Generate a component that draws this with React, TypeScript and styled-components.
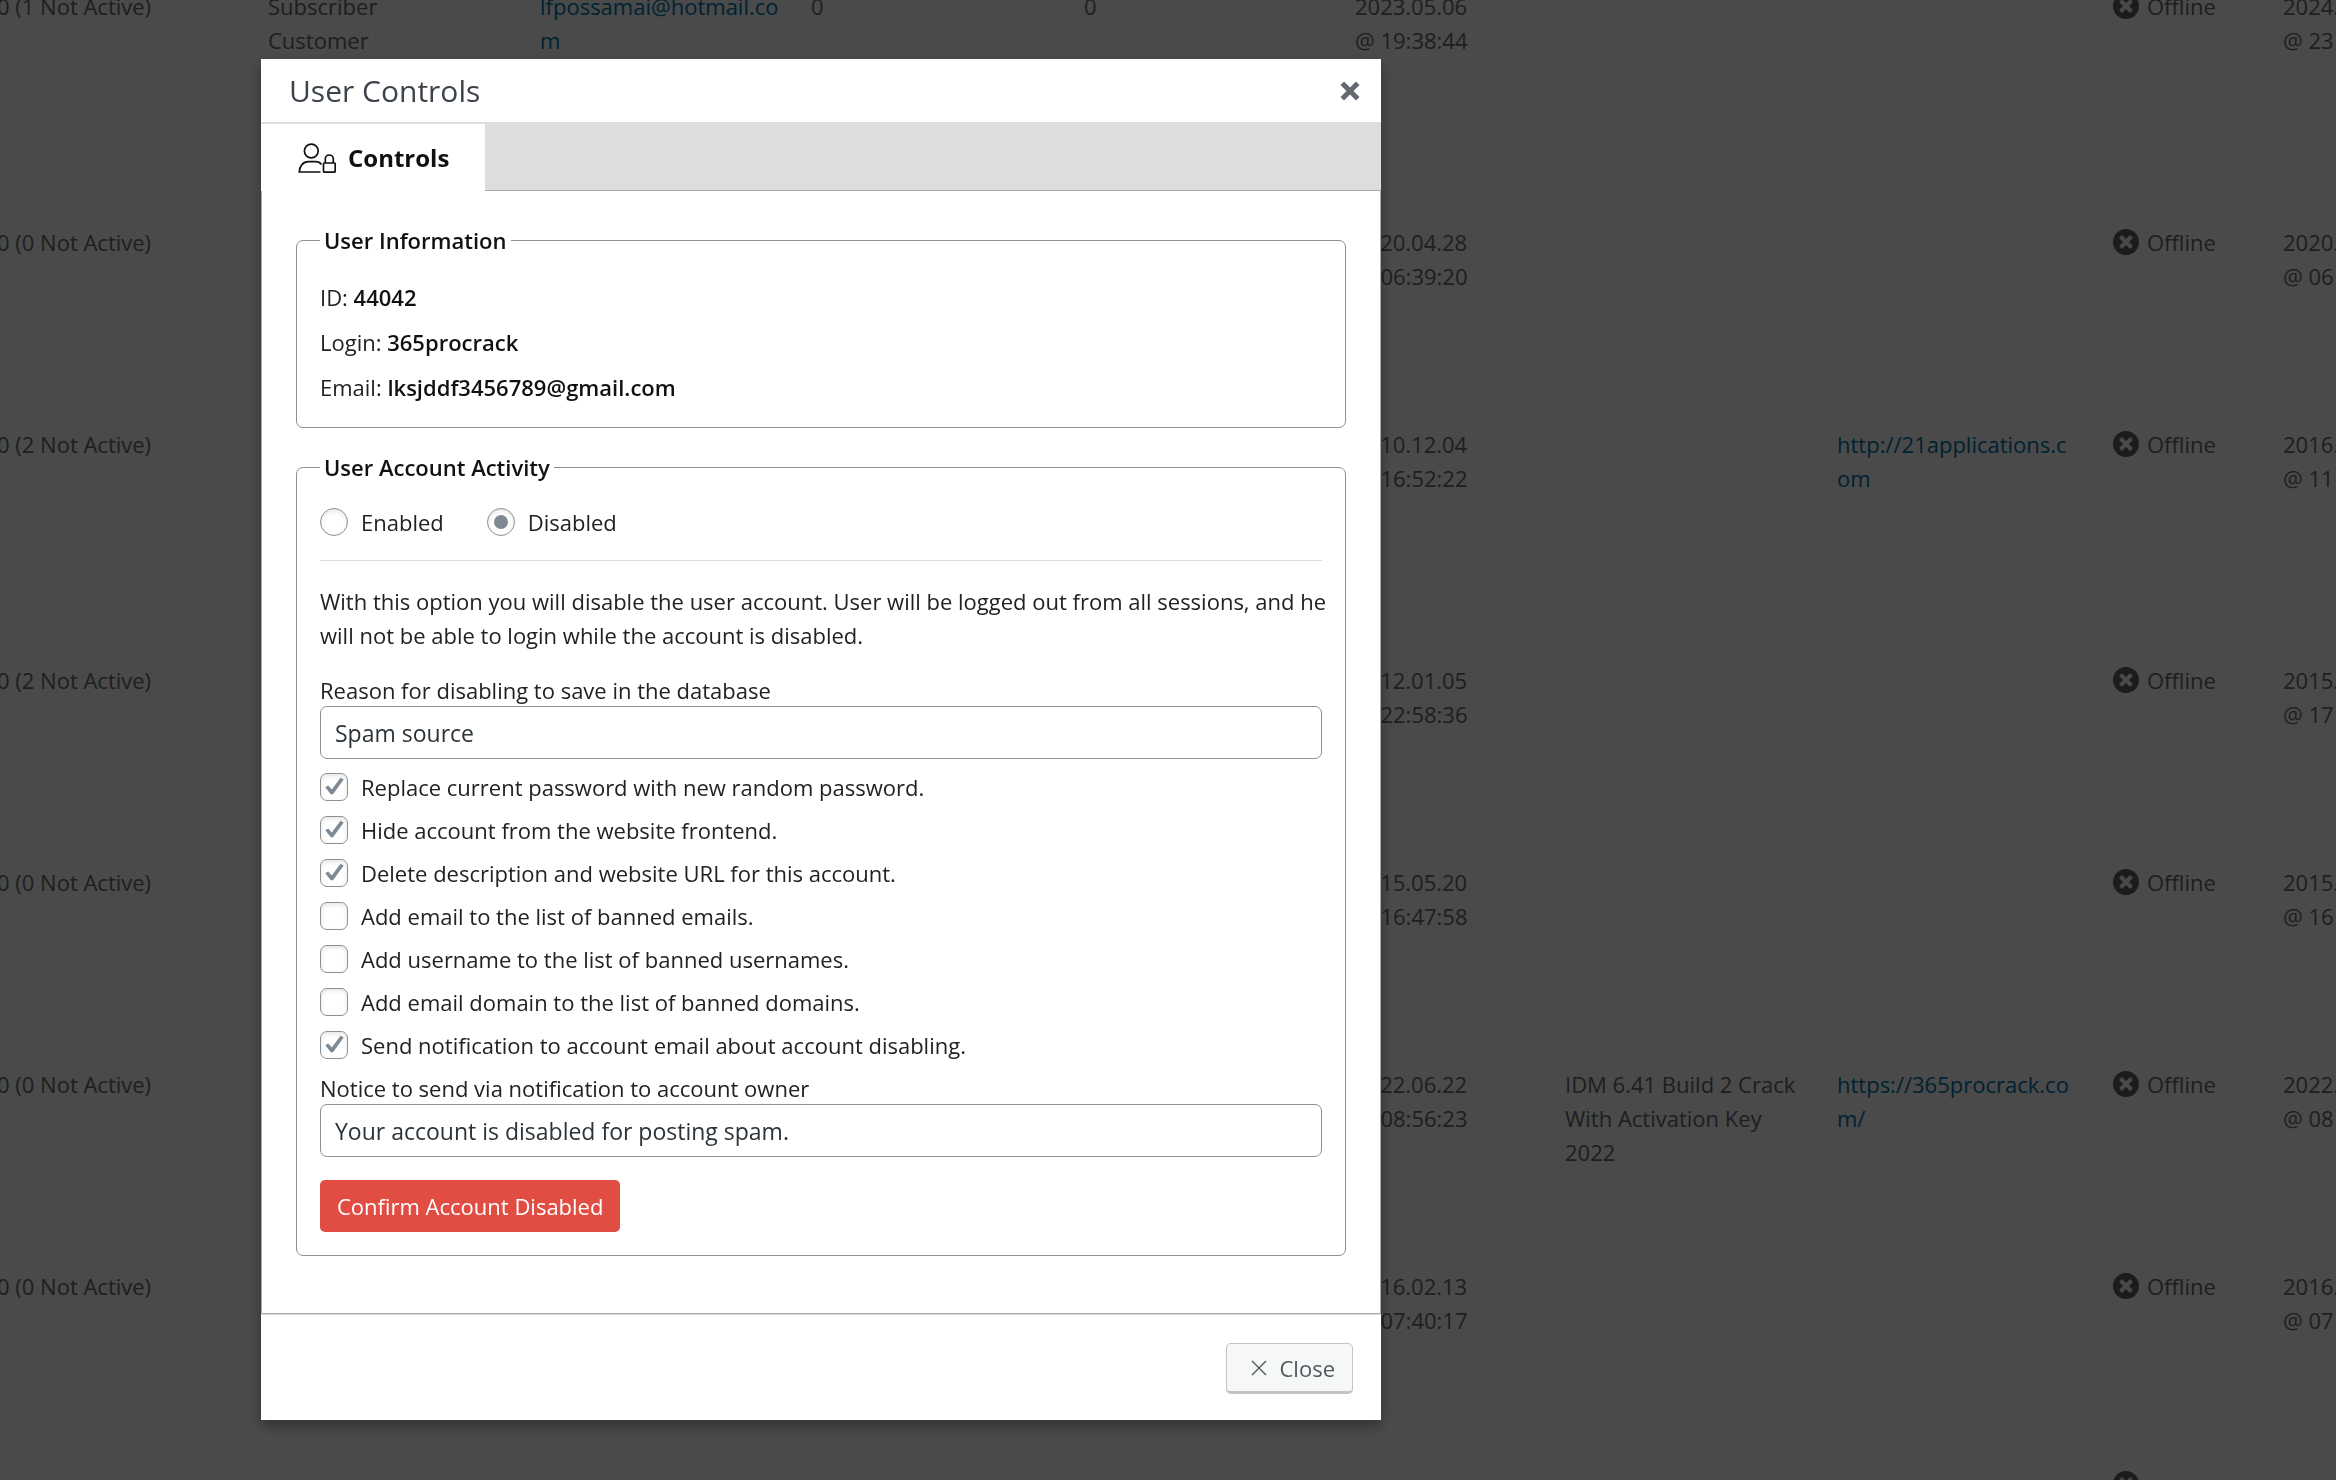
import React, { useState } from "react";
import styled, { createGlobalStyle } from "styled-components";

const GlobalStyle = createGlobalStyle`
  *, *::before, *::after { box-sizing: border-box; }
  body {
    margin: 0;
    background: #f4f8f4;
    color: #1d2327;
    font-family: "Open Sans", "Noto Sans", sans-serif;
    font-size: 22px;
    line-height: 34px;
  }
  button, input { font: inherit; }
`;

/* ---------- users list behind the dialog ---------- */

const Page = styled.main`
  height: 100vh;
  overflow: hidden;
`;

const UsersTable = styled.table`
  width: calc(100% + 80px);
  margin: -25px 0 0 -20px;
  table-layout: fixed;
  border-collapse: collapse;
  color: #646970;
`;

const Col = styled.col<{ $w?: number }>`
  width: ${(p) => (p.$w ? `${p.$w}px` : "auto")};
`;

const UserRow = styled.tr<{ $tall?: boolean }>`
  height: ${(p) => (p.$tall ? 236 : 202)}px;
`;

const Cell = styled.td`
  padding: 14px 17px;
  vertical-align: top;
  white-space: nowrap;
`;

const Line = styled.span`
  display: block;
`;

const SiteLink = styled.a`
  color: #0073aa;
  text-decoration: none;
`;

const Status = styled.span`
  display: flex;
  align-items: center;
  gap: 8px;
  padding-left: 4px;

  svg {
    width: 26px;
    height: 26px;
    flex: none;
  }
`;

/* ---------- dialog ---------- */

const Overlay = styled.div`
  position: fixed;
  inset: 0;
  overflow: hidden;
  padding: 59px 0 0 261px;
  background: rgba(0, 0, 0, 0.7);
`;

const Dialog = styled.section`
  width: 1120px;
  max-width: calc(100% - 40px);
  background: #fff;
  box-shadow: 0 6px 12px rgba(0, 0, 0, 0.35);
`;

const DialogHeader = styled.header`
  display: flex;
  align-items: center;
  justify-content: space-between;
  height: 65px;
  padding: 0 20px 0 28px;
  border-bottom: 2px solid #ddd;
`;

const DialogTitle = styled.h1`
  margin: 0;
  color: #3c434a;
  font-size: 30px;
  font-weight: 400;
  line-height: 40px;
`;

const IconButton = styled.button`
  display: flex;
  padding: 0;
  border: 0;
  background: none;
  color: #646970;
  cursor: pointer;

  svg {
    width: 22px;
    height: 22px;
  }
`;

const TabBar = styled.div`
  display: flex;
  height: 67px;
  background: linear-gradient(#aaa, #aaa) bottom / 100% 1px no-repeat #ddd;
`;

const Tab = styled.button`
  display: flex;
  align-items: center;
  gap: 12px;
  padding: 0 36px 0 37px;
  border: 0;
  background: #fff;
  color: #111;
  font-size: 24px;
  font-weight: 700;

  svg {
    width: 38px;
    height: 32px;
  }
`;

const DialogBody = styled.div`
  display: flex;
  flex-direction: column;
  gap: 22px;
  padding: 32px 34px 57px;
  border: 1px solid #aaa;
  border-top: 0;
`;

const Group = styled.fieldset`
  min-width: 0;
  margin: 0;
  padding: 0 23px 23px;
  border: 1px solid #8c8f94;
  border-radius: 7px;
  color: #222;
`;

const GroupTitle = styled.legend`
  padding: 0 4px;
  color: #111;
  font-weight: 600;
`;

const InfoList = styled.div`
  display: flex;
  flex-direction: column;
  gap: 11px;
  padding-top: 23px;

  strong {
    color: #111;
    font-weight: 600;
  }
`;

const RadioRow = styled.div`
  display: flex;
  gap: 43px;
  padding: 21px 0;
  border-bottom: 1px solid #dcdcde;
`;

const Choice = styled.label`
  display: flex;
  align-items: center;
  gap: 13px;
`;

const RadioInput = styled.input`
  appearance: none;
  display: grid;
  place-items: center;
  width: 28px;
  height: 28px;
  margin: 0;
  border: 1px solid #8c8f94;
  border-radius: 50%;
  background: #fff;
  box-shadow: inset 0 2px 4px rgba(0, 0, 0, 0.1);

  &:checked::before {
    content: "";
    width: 14px;
    height: 14px;
    border-radius: 50%;
    background: #7e8993;
  }
`;

const Notice = styled.p`
  margin: 23px -12px 22px 0;
`;

const Field = styled.div`
  display: flex;
  flex-direction: column;
`;

const FieldLabel = styled.label`
  line-height: 32px;
`;

const TextInput = styled.input`
  width: 100%;
  height: 53px;
  padding: 0 14px;
  border: 1px solid #8c8f94;
  border-radius: 7px;
  background: #fff;
  color: #2c3338;
  font-size: 23px;
`;

const Options = styled.div`
  display: flex;
  flex-direction: column;
  padding: 6px 0;

  label {
    height: 43px;
  }
`;

const CheckBox = styled.span`
  position: relative;
  display: flex;

  input {
    appearance: none;
    width: 28px;
    height: 28px;
    margin: 0;
    border: 1px solid #8c8f94;
    border-radius: 7px;
    background: #fff;
    box-shadow: inset 0 2px 4px rgba(0, 0, 0, 0.1);
  }

  svg {
    position: absolute;
    inset: 0;
    width: 28px;
    height: 28px;
    pointer-events: none;
    visibility: hidden;
  }

  input:checked + svg {
    visibility: visible;
  }
`;

const ConfirmButton = styled.button`
  display: block;
  height: 52px;
  margin-top: 23px;
  padding: 0 17px;
  border: 0;
  border-radius: 5px;
  background: #e14d43;
  color: #fff;
  cursor: pointer;
`;

const DialogFooter = styled.footer`
  display: flex;
  justify-content: flex-end;
  padding: 28px 28px 26px;
  border-top: 1px solid #ddd;
`;

const CloseButton = styled.button`
  display: flex;
  align-items: center;
  gap: 13px;
  height: 51px;
  padding: 0 17px 0 24px;
  border: 1px solid #c3c4c7;
  border-bottom-width: 3px;
  border-radius: 5px;
  background: #f6f7f7;
  color: #50575e;
  cursor: pointer;

  svg {
    width: 16px;
    height: 16px;
  }
`;

/* ---------- icons ---------- */

const OfflineIcon = () => (
  <svg viewBox="0 0 26 26" aria-hidden="true">
    <circle cx="13" cy="13" r="13" fill="#5a5f66" />
    <path d="M7.5 7.5l11 11M18.5 7.5l-11 11" stroke="#f4f8f4" strokeWidth="4" />
  </svg>
);

const BoldCross = () => (
  <svg viewBox="0 0 22 22" aria-hidden="true">
    <path
      d="M5 1.5L11 7.5l6-6L20.5 5l-6 6 6 6L17 20.5l-6-6-6 6L1.5 17l6-6-6-6z"
      fill="currentColor"
    />
  </svg>
);

const ThinCross = () => (
  <svg viewBox="0 0 16 16" aria-hidden="true">
    <path d="M1 1l14 14M15 1L1 15" stroke="currentColor" strokeWidth="1.4" />
  </svg>
);

const UserLockIcon = () => (
  <svg viewBox="0 0 38 32" fill="none" stroke="#111" strokeWidth="1.7" aria-hidden="true">
    <circle cx="13.3" cy="9" r="6.9" />
    <path
      d="M23.5 22.5C22 20.5 20 19.7 17.5 19.7H10.5C5 19.7 1.5 24 1.3 30H22.5"
      strokeLinejoin="round"
    />
    <rect x="25.5" y="21" width="11.7" height="9.2" rx="1" />
    <path d="M27.3 21v-4a4 4 0 0 1 8 0v4" />
  </svg>
);

const CheckMark = () => (
  <svg viewBox="0 0 28 28" aria-hidden="true">
    <path
      d="M5.2 14.2L8.2 12.5l3.6 4L20.5 4.8l3.2 1.7L13 21.3H10.8z"
      fill="#7e8993"
    />
  </svg>
);

/* ---------- data ---------- */

interface User {
  posts: string;
  roles?: string[];
  email?: string[];
  counts?: [string, string];
  registered: [string, string];
  description?: string[];
  website?: string[];
  lastSeen: [string, string];
  tall?: boolean;
}

const users: User[] = [
  {
    posts: "0 (1 Not Active)",
    roles: ["Subscriber", "Customer"],
    email: ["lfpossamai@hotmail.co", "m"],
    counts: ["0", "0"],
    registered: ["2023.05.06", "@ 19:38:44"],
    lastSeen: ["2024.", "@ 23"],
    tall: true,
  },
  { posts: "0 (0 Not Active)", registered: ["2020.04.28", "@ 06:39:20"], lastSeen: ["2020.", "@ 06"] },
  {
    posts: "0 (2 Not Active)",
    registered: ["2010.12.04", "@ 16:52:22"],
    website: ["http://21applications.c", "om"],
    lastSeen: ["2016.", "@ 11"],
    tall: true,
  },
  { posts: "0 (2 Not Active)", registered: ["2012.01.05", "@ 22:58:36"], lastSeen: ["2015.", "@ 17"] },
  { posts: "0 (0 Not Active)", registered: ["2015.05.20", "@ 16:47:58"], lastSeen: ["2015.", "@ 16"] },
  {
    posts: "0 (0 Not Active)",
    registered: ["2022.06.22", "@ 08:56:23"],
    description: ["IDM 6.41 Build 2 Crack", "With Activation Key", "2022"],
    website: ["https://365procrack.co", "m/"],
    lastSeen: ["2022.", "@ 08"],
  },
  { posts: "0 (0 Not Active)", registered: ["2016.02.13", "@ 07:40:17"], lastSeen: ["2016.", "@ 07"] },
  { posts: "", registered: ["", ""], lastSeen: ["", ""] },
];

const columnWidths = [271, 272, 271, 273, 271, 210, 272, 272, 174];

const options: { id: string; label: string; on: boolean }[] = [
  { id: "password", label: "Replace current password with new random password.", on: true },
  { id: "hide", label: "Hide account from the website frontend.", on: true },
  { id: "delete", label: "Delete description and website URL for this account.", on: true },
  { id: "ban-email", label: "Add email to the list of banned emails.", on: false },
  { id: "ban-name", label: "Add username to the list of banned usernames.", on: false },
  { id: "ban-domain", label: "Add email domain to the list of banned domains.", on: false },
  { id: "notify", label: "Send notification to account email about account disabling.", on: true },
];

const Lines = ({ items = [] }: { items?: string[] }) => (
  <>
    {items.map((text, i) => (
      <Line key={i}>{text}</Line>
    ))}
  </>
);

const UsersList = () => (
  <UsersTable>
    <colgroup>
      {columnWidths.map((w, i) => (
        <Col key={i} $w={w} />
      ))}
      <Col />
    </colgroup>
    <tbody>
      {users.map((user, i) => (
        <UserRow key={i} $tall={user.tall}>
          <Cell>{user.posts}</Cell>
          <Cell><Lines items={user.roles} /></Cell>
          <Cell>
            {user.email && (
              <SiteLink href="#email"><Lines items={user.email} /></SiteLink>
            )}
          </Cell>
          <Cell>{user.counts?.[0]}</Cell>
          <Cell>{user.counts?.[1]}</Cell>
          <Cell><Lines items={user.registered} /></Cell>
          <Cell><Lines items={user.description} /></Cell>
          <Cell>
            {user.website && (
              <SiteLink href="#website"><Lines items={user.website} /></SiteLink>
            )}
          </Cell>
          <Cell>
            <Status>
              <OfflineIcon />
              {user.posts && "Offline"}
            </Status>
          </Cell>
          <Cell><Lines items={user.lastSeen} /></Cell>
        </UserRow>
      ))}
    </tbody>
  </UsersTable>
);

export default function App() {
  const [activity, setActivity] = useState("disabled");

  return (
    <>
      <GlobalStyle />
      <Page>
        <UsersList />
      </Page>
      <Overlay>
        <Dialog role="dialog" aria-labelledby="dialog-title">
          <DialogHeader>
            <DialogTitle id="dialog-title">User Controls</DialogTitle>
            <IconButton type="button" aria-label="Close dialog">
              <BoldCross />
            </IconButton>
          </DialogHeader>
          <TabBar role="tablist">
            <Tab type="button" role="tab" aria-selected="true">
              <UserLockIcon />
              Controls
            </Tab>
          </TabBar>
          <DialogBody>
            <Group>
              <GroupTitle>User Information</GroupTitle>
              <InfoList>
                <div>ID: <strong>44042</strong></div>
                <div>Login: <strong>365procrack</strong></div>
                <div>Email: <strong>lksjddf3456789@gmail.com</strong></div>
              </InfoList>
            </Group>
            <Group>
              <GroupTitle>User Account Activity</GroupTitle>
              <RadioRow>
                {["Enabled", "Disabled"].map((label) => (
                  <Choice key={label}>
                    <RadioInput
                      type="radio"
                      name="activity"
                      checked={activity === label.toLowerCase()}
                      onChange={() => setActivity(label.toLowerCase())}
                    />
                    {label}
                  </Choice>
                ))}
              </RadioRow>
              <Notice>
                With this option you will disable the user account. User will be logged out from all
                sessions, and he will not be able to login while the account is disabled.
              </Notice>
              <Field>
                <FieldLabel htmlFor="reason">Reason for disabling to save in the database</FieldLabel>
                <TextInput id="reason" type="text" defaultValue="Spam source" />
              </Field>
              <Options>
                {options.map((option) => (
                  <Choice key={option.id}>
                    <CheckBox>
                      <input type="checkbox" defaultChecked={option.on} />
                      <CheckMark />
                    </CheckBox>
                    {option.label}
                  </Choice>
                ))}
              </Options>
              <Field>
                <FieldLabel htmlFor="notice">Notice to send via notification to account owner</FieldLabel>
                <TextInput id="notice" type="text" defaultValue="Your account is disabled for posting spam." />
              </Field>
              <ConfirmButton type="button">Confirm Account Disabled</ConfirmButton>
            </Group>
          </DialogBody>
          <DialogFooter>
            <CloseButton type="button">
              <ThinCross />
              Close
            </CloseButton>
          </DialogFooter>
        </Dialog>
      </Overlay>
    </>
  );
}
